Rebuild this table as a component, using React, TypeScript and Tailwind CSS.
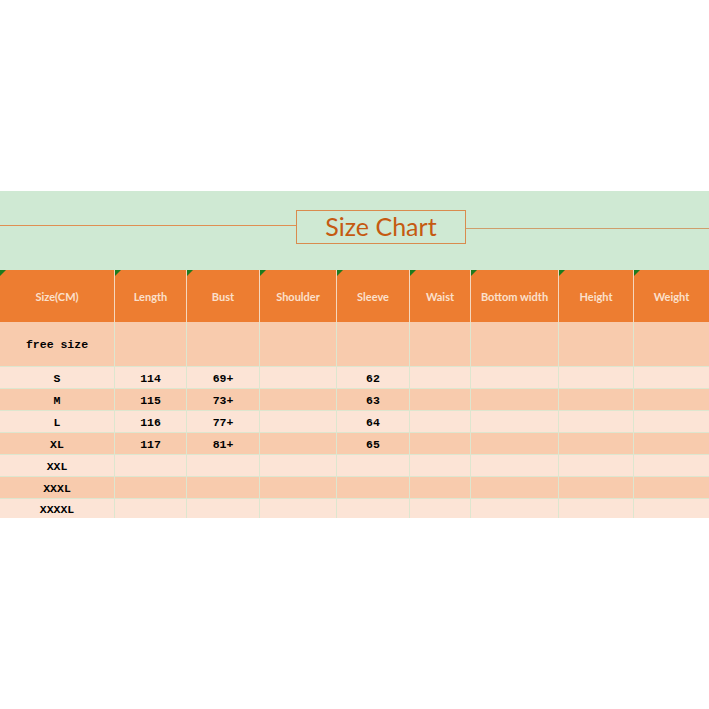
import React from "react";

// column widths taken from the chart grid
const columns = [
  "Size(CM)",
  "Length",
  "Bust",
  "Shoulder",
  "Sleeve",
  "Waist",
  "Bottom width",
  "Height",
  "Weight",
];

const rows: { size: string; cells: string[]; tall?: boolean }[] = [
  { size: "free size", cells: ["", "", "", "", "", "", "", ""], tall: true },
  { size: "S", cells: ["114", "69+", "", "62", "", "", "", ""] },
  { size: "M", cells: ["115", "73+", "", "63", "", "", "", ""] },
  { size: "L", cells: ["116", "77+", "", "64", "", "", "", ""] },
  { size: "XL", cells: ["117", "81+", "", "65", "", "", "", ""] },
  { size: "XXL", cells: ["", "", "", "", "", "", "", ""] },
  { size: "XXXL", cells: ["", "", "", "", "", "", "", ""] },
  { size: "XXXXL", cells: ["", "", "", "", "", "", "", ""] },
];

const gridCols =
  "grid grid-cols-[114px_72px_73px_77px_73px_61px_88px_75px_76px]";

export default function App() {
  return (
    <div className="w-[709px] h-[709px] bg-white overflow-hidden">
      <div className="h-[191px]" />

      {/* Title band */}
      <div className="h-[79px] bg-[#cfe9d3] flex">
        <div className="w-[296px] h-px mt-[34px] bg-[#e08f52]" />
        <div className="w-[170px] h-[34px] mt-[19px] border border-[#d98b4e] flex items-center justify-center">
          <span
            className="text-[25px] leading-none text-[#c55a11] pb-[2px]"
            style={{ fontFamily: "Lato, 'Liberation Sans', sans-serif" }}
          >
            Size Chart
          </span>
        </div>
        <div className="flex-1 h-px mt-[37px] bg-[#cf9e6c]" />
      </div>

      {/* Header */}
      <div
        className={`${gridCols} h-[52px] bg-[#ed7d31]`}
        style={{ fontFamily: "Lato, 'Liberation Sans', sans-serif" }}
      >
        {columns.map((c, i) => (
          <div
            key={c}
            className={`relative flex items-center justify-center pt-[2px] text-[11px] font-bold text-[#fbe0cc] ${
              i > 0 ? "border-l border-[#f6d7bd]" : ""
            }`}
          >
            <div className="absolute left-0 top-0 w-[6px] h-[6px] bg-[#1e7b1e] [clip-path:polygon(0_0,100%_0,0_100%)]" />
            {c}
          </div>
        ))}
      </div>

      {/* Body */}
      <div
        className="text-[11.5px] font-bold text-black"
        style={{ fontFamily: "'Liberation Mono', 'DejaVu Sans Mono', monospace" }}
      >
        {rows.map((r, ri) => (
          <div
            key={r.size}
            className={`${gridCols} ${
              r.tall ? "h-[44px]" : ri === rows.length - 1 ? "h-[20px]" : "h-[22px]"
            } ${ri % 2 === 0 ? "bg-[#f8cbad]" : "bg-[#fce4d6]"} ${
              ri > 0 ? "border-t border-[#dde6cf]" : ""
            }`}
          >
            <div className="flex items-center justify-center pt-[2px]">{r.size}</div>
            {r.cells.map((v, ci) => (
              <div
                key={ci}
                className="flex items-center justify-center pt-[2px] border-l border-[#dde6cf]"
              >
                {v}
              </div>
            ))}
          </div>
        ))}
      </div>
    </div>
  );
}
